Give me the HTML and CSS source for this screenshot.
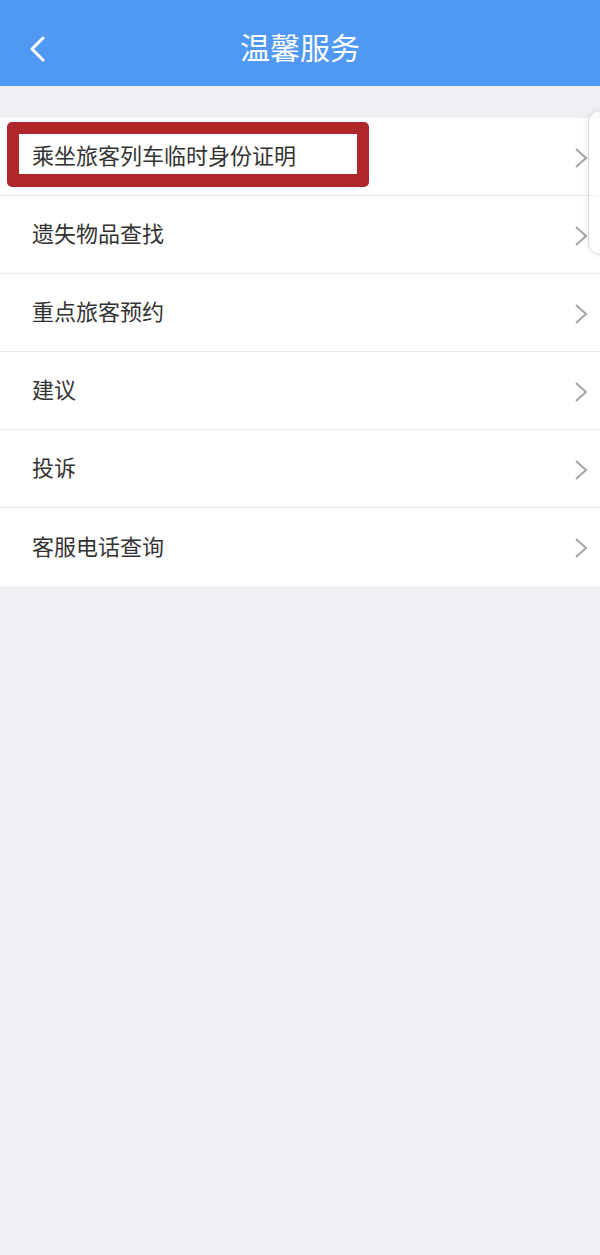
FILE: index.html
```html
<!DOCTYPE html>
<html lang="zh">
<head>
<meta charset="utf-8">
<title>温馨服务</title>
<link rel="stylesheet" href="styles.css">
</head>
<body>
<div class="page">
  <header class="topbar">
    <span class="back">
      <svg width="16" height="26" viewBox="0 0 16 26"><path d="M14 2 L3 13 L14 24" fill="none" stroke="#fff" stroke-width="3" stroke-linecap="round" stroke-linejoin="round"/></svg>
    </span>
    <h1 class="title">温馨服务</h1>
  </header>
  <ul class="list">
    <li class="row"><span class="label">乘坐旅客列车临时身份证明</span><span class="chev"><svg width="14" height="22" viewBox="0 0 14 22"><path d="M2 2 L12 11 L2 20" fill="none" stroke="#a3a3a3" stroke-width="2"/></svg></span><span class="mark"></span></li>
    <li class="row"><span class="label">遗失物品查找</span><span class="chev"><svg width="14" height="22" viewBox="0 0 14 22"><path d="M2 2 L12 11 L2 20" fill="none" stroke="#a3a3a3" stroke-width="2"/></svg></span></li>
    <li class="row"><span class="label">重点旅客预约</span><span class="chev"><svg width="14" height="22" viewBox="0 0 14 22"><path d="M2 2 L12 11 L2 20" fill="none" stroke="#a3a3a3" stroke-width="2"/></svg></span></li>
    <li class="row"><span class="label">建议</span><span class="chev"><svg width="14" height="22" viewBox="0 0 14 22"><path d="M2 2 L12 11 L2 20" fill="none" stroke="#a3a3a3" stroke-width="2"/></svg></span></li>
    <li class="row"><span class="label">投诉</span><span class="chev"><svg width="14" height="22" viewBox="0 0 14 22"><path d="M2 2 L12 11 L2 20" fill="none" stroke="#a3a3a3" stroke-width="2"/></svg></span></li>
    <li class="row"><span class="label">客服电话查询</span><span class="chev"><svg width="14" height="22" viewBox="0 0 14 22"><path d="M2 2 L12 11 L2 20" fill="none" stroke="#a3a3a3" stroke-width="2"/></svg></span></li>
  </ul>
  <div class="floater"></div>
</div>
</body>
</html>
```

FILE: styles.css
```css
html, body {
  margin: 0;
  padding: 0;
  background: #efeff4;
}
body {
  font-family: "Noto Sans CJK SC", "Noto Sans", sans-serif;
}
.page {
  position: relative;
  width: 600px;
  min-height: 1255px;
  background: #efeff4;
  overflow: hidden;
}
.topbar {
  height: 86px;
  background: #4f99f5;
  display: flex;
  align-items: center;
  justify-content: center;
  position: relative;
}
.back {
  position: absolute;
  left: 29px;
  top: 36px;
  display: block;
  line-height: 0;
}
.title {
  margin: 0;
  color: #fff;
  font-size: 30px;
  font-weight: 400;
  line-height: 1;
  margin-top: 6px;
}
.list {
  list-style: none;
  margin: 32px 0 0 0;
  padding: 0;
  background: #fff;
}
.row {
  position: relative;
  height: 77px;
  display: flex;
  align-items: center;
  justify-content: space-between;
  padding: 0 12px 0 32px;
  border-bottom: 1px solid #ececef;
  box-sizing: content-box;
}
.row:last-child {
  border-bottom: none;
  height: 78px;
}
.label {
  position: relative;
  z-index: 2;
  font-size: 22px;
  color: #333;
  line-height: 1;
  margin-top: -5px;
}
.chev {
  line-height: 0;
  margin-top: 2px;
}
.mark {
  position: absolute;
  left: 7px;
  top: 4px;
  width: 338px;
  height: 40px;
  border: 12px solid #b0282b;
  border-bottom-width: 13px;
  border-radius: 5px;
  z-index: 1;
}
.floater {
  position: absolute;
  left: 588px;
  top: 110px;
  width: 40px;
  height: 143px;
  border: 1px solid #d8d8dc;
  border-radius: 12px;
  background: linear-gradient(to right, rgba(255,255,255,0.6), #fff);
  box-shadow: -2px 0 6px rgba(0,0,0,0.05);
}
```
